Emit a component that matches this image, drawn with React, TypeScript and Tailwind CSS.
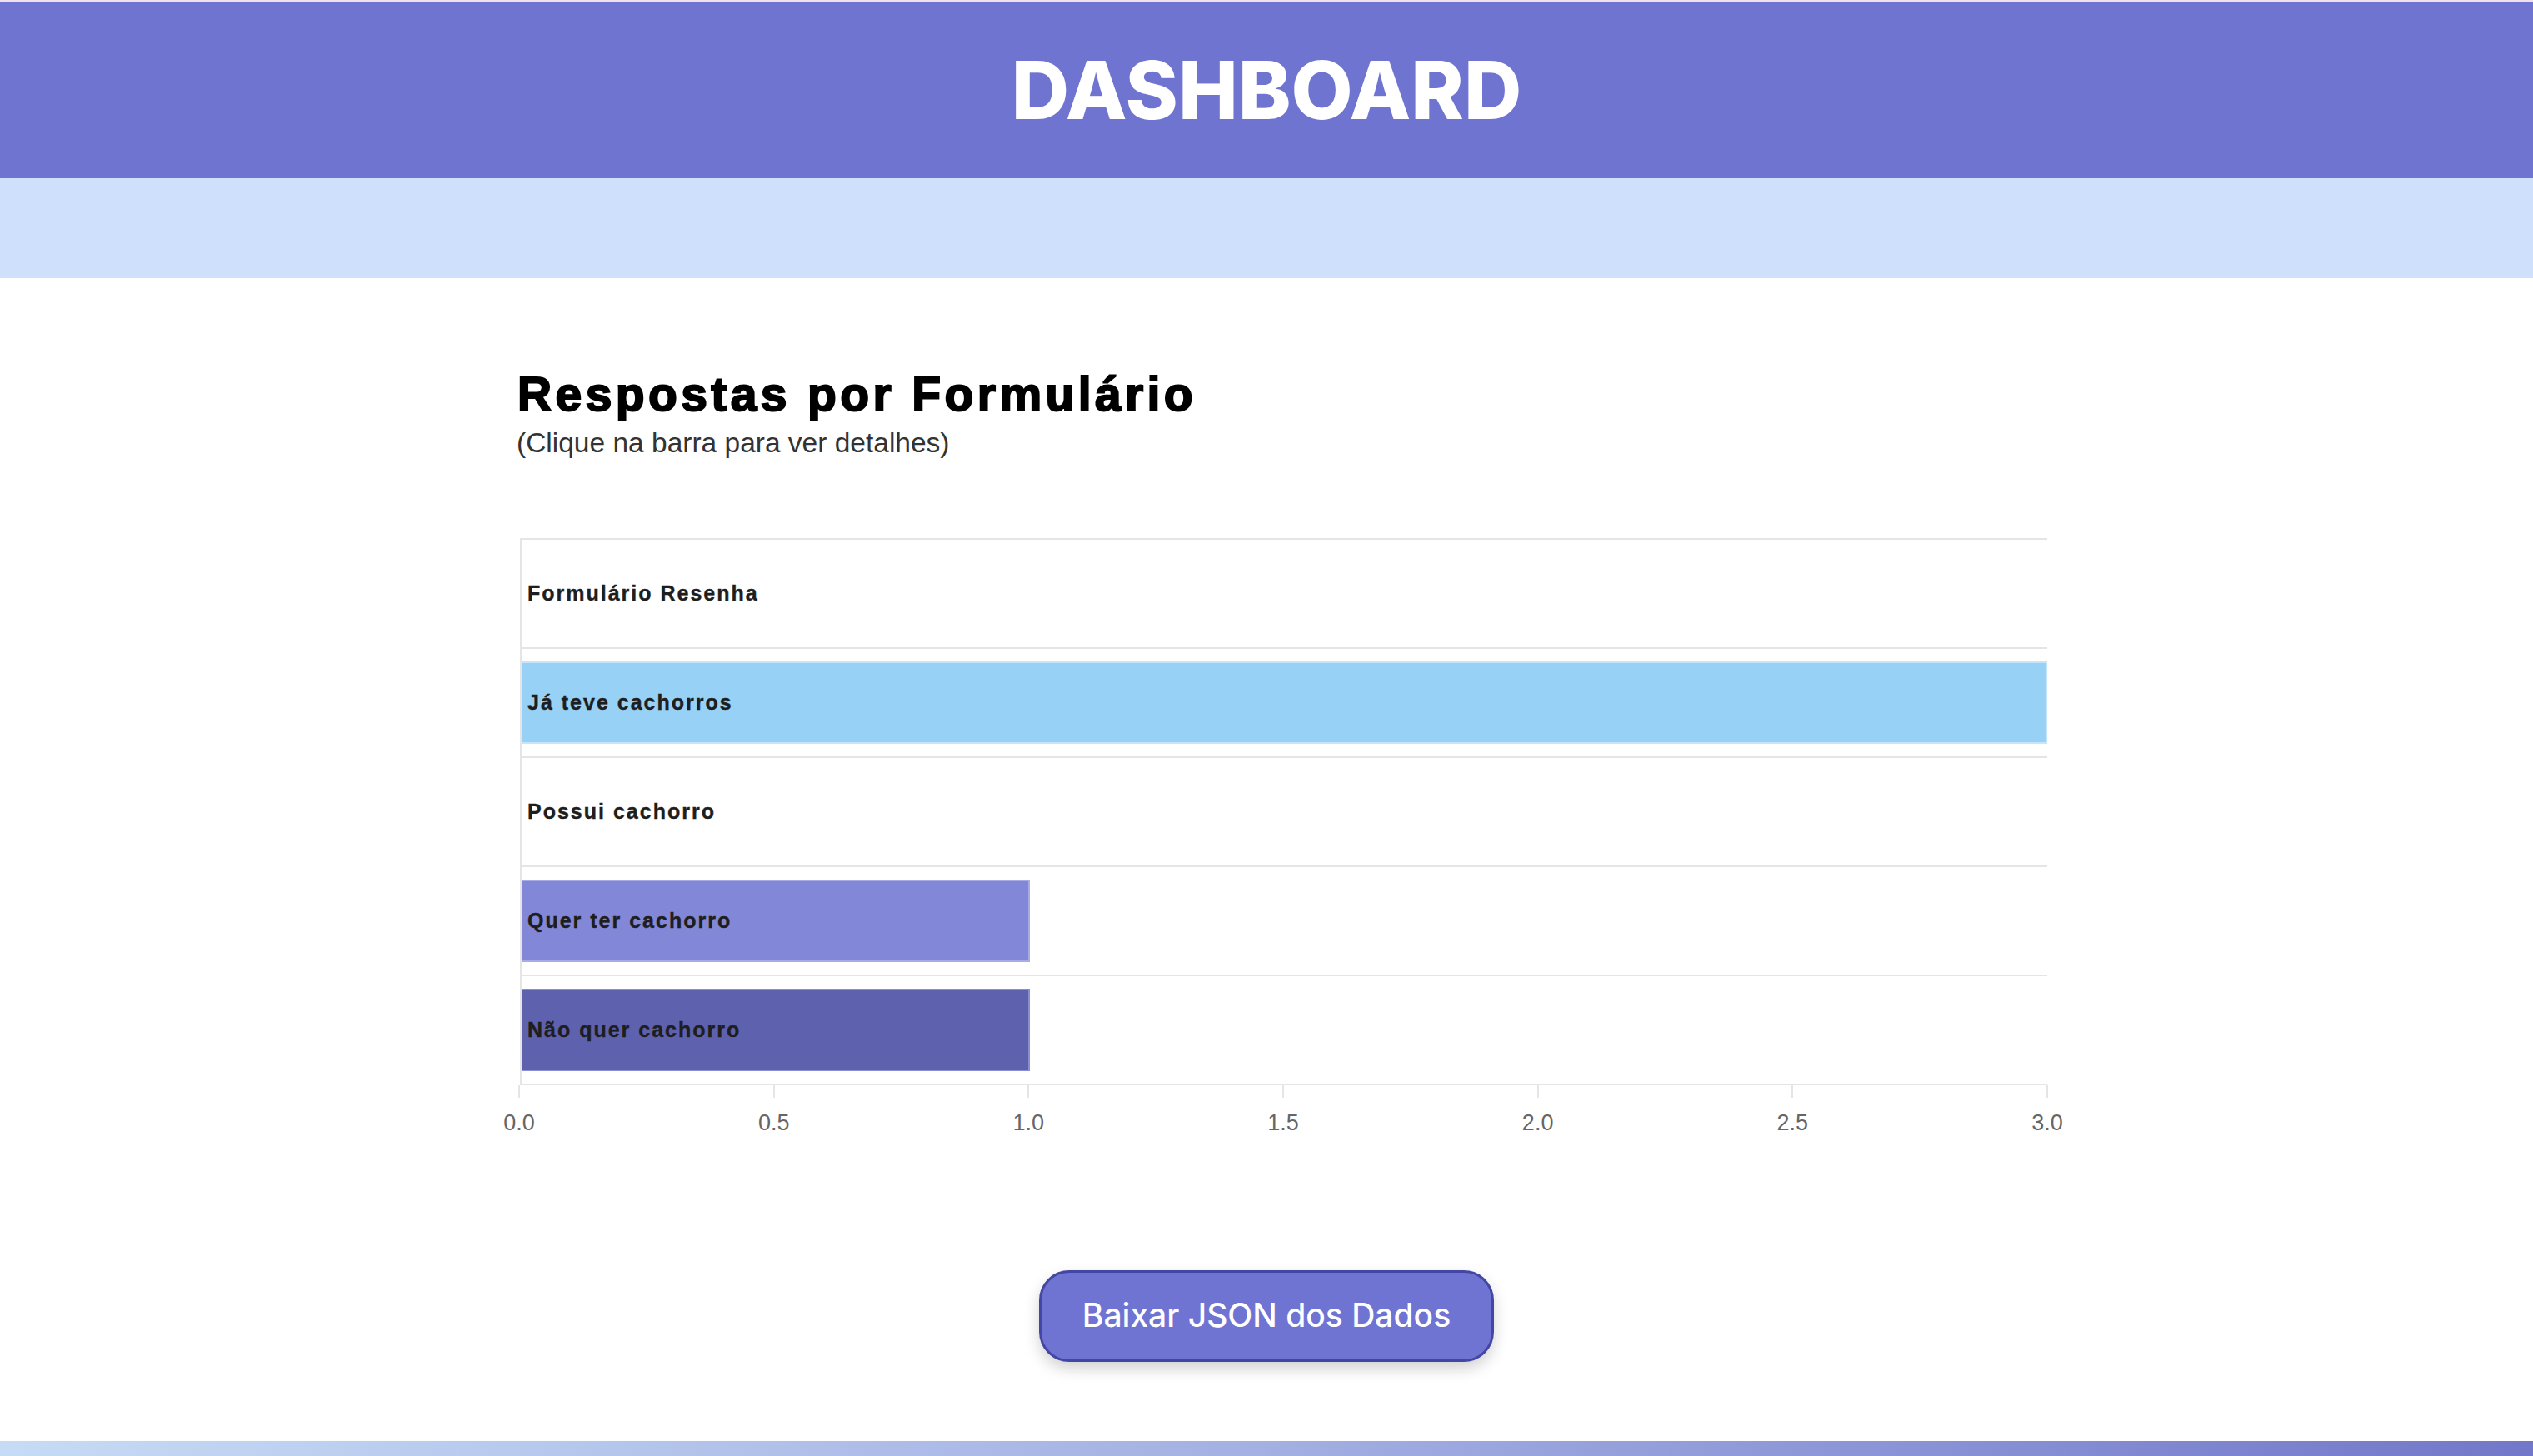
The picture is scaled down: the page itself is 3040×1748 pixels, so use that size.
import clsx from 'clsx'

const rows = [
  { id: 1, label: 'Formulário Resenha', bar: '' },
  { id: 2, label: 'Já teve cachorros', bar: 'w-full bg-[#97d1f5] border-[#c4e5fa]' },
  { id: 3, label: 'Possui cachorro', bar: '' },
  { id: 4, label: 'Quer ter cachorro', bar: 'w-1/3 bg-[#8387d7] border-[#a9abe6]' },
  { id: 5, label: 'Não quer cachorro', bar: 'w-1/3 bg-[#5e61ae] border-[#8a8dcf]' },
]

const ticks = ['0.0', '0.5', '1.0', '1.5', '2.0', '2.5', '3.0']

const Chart = () => (
  <div className="flex flex-col ml-[4px] w-[1833px]">
    <div className="flex flex-col border-l-2 border-b-2 border-[#e5e5e5]">
      {rows.map(({ id, label, bar }) => (
        <div key={id} className="grid h-[131px] items-center border-t-2 border-[#e5e5e5]">
          <div className="col-start-1 row-start-1 h-[99px]">
            {bar && <div className={clsx('h-full border-2 border-l-0', bar)} />}
          </div>
          <span className="col-start-1 row-start-1 pl-[7px] font-['Liberation_Sans',Arial,sans-serif] text-[25px] font-bold leading-none tracking-[2px] text-[#1e1e1e] [-webkit-text-stroke:0.4px_#1e1e1e]">
            {label}
          </span>
        </div>
      ))}
    </div>
    <div className="flex justify-between -ml-[1px]">
      {ticks.map((t) => (
        <div key={t} className="flex w-0 flex-col items-center">
          <div className="h-[15px] w-[2px] shrink-0 bg-[#e5e5e5]" />
          <span className="mt-[17px] font-['Liberation_Sans',Arial,sans-serif] text-[27px] leading-none text-[#666]">
            {t}
          </span>
        </div>
      ))}
    </div>
  </div>
)

const App = () => {
  return (
    <div className="flex min-h-screen flex-col bg-white">
      <header className="flex h-[214px] items-center justify-center border-t-2 border-[#f1dfe9] bg-[#6f74d1]">
        <h1 className="font-['Inter',sans-serif] text-[96px] font-extrabold leading-none text-white">DASHBOARD</h1>
      </header>
      <div className="h-[120px] bg-[#cfe0fd]" />

      <main className="flex flex-col">
        <section className="ml-[621px] mt-[111px] flex w-[1840px] flex-col">
          <h2 className="font-['Liberation_Sans',Arial,sans-serif] text-[57px] font-bold leading-none tracking-[4.4px] text-black [-webkit-text-stroke:2px_black]">
            Respostas por Formulário
          </h2>
          <p className="-ml-[1px] mt-[13px] font-['Liberation_Sans',Arial,sans-serif] text-[33.5px] leading-none text-[#333]">
            (Clique na barra para ver detalhes)
          </p>
          <div className="-ml-[1px] mt-[97px]">
            <Chart />
          </div>
        </section>

        <div className="mt-[163px] flex justify-center">
          <button className="h-[110px] w-[546px] rounded-[36px] border-[3px] border-[#4347a3] bg-[#6f74d3] font-['Inter',sans-serif] text-[39px] font-medium text-white shadow-[0_8px_18px_rgba(0,0,0,0.18)]">
            Baixar JSON dos Dados
          </button>
        </div>
      </main>

      <footer className="mt-auto h-[18px] bg-linear-to-r from-[#c6dbf5] via-[#a3b0e2] to-[#7377c9]" />
    </div>
  )
}

export default App
